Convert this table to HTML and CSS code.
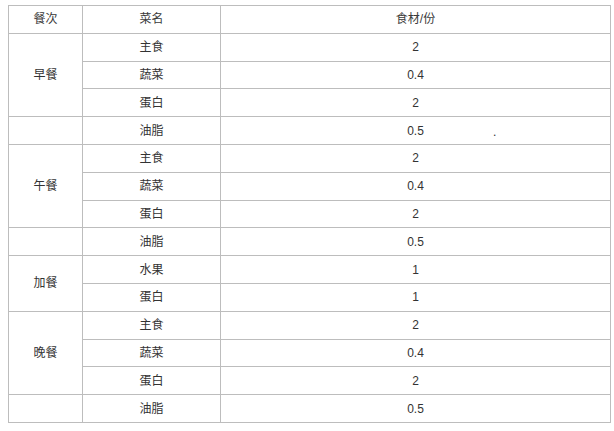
FILE: index.html
```html
<!DOCTYPE html>
<html lang="zh">
<head>
<meta charset="utf-8">
<link rel="stylesheet" href="styles.css">
</head>
<body>
<table class="meal-table">
  <colgroup>
    <col class="c1"><col class="c2"><col class="c3">
  </colgroup>
  <thead>
    <tr><th>餐次</th><th>菜名</th><th>食材/份</th></tr>
  </thead>
  <tbody>
    <tr><td rowspan="3">早餐</td><td>主食</td><td>2</td></tr>
    <tr><td>蔬菜</td><td>0.4</td></tr>
    <tr><td>蛋白</td><td>2</td></tr>
    <tr><td></td><td>油脂</td><td class="amount">0.5<span class="stray">.</span></td></tr>
    <tr><td rowspan="3">午餐</td><td>主食</td><td>2</td></tr>
    <tr><td>蔬菜</td><td>0.4</td></tr>
    <tr><td>蛋白</td><td>2</td></tr>
    <tr><td></td><td>油脂</td><td>0.5</td></tr>
    <tr><td rowspan="2">加餐</td><td>水果</td><td>1</td></tr>
    <tr><td>蛋白</td><td>1</td></tr>
    <tr><td rowspan="3">晚餐</td><td>主食</td><td>2</td></tr>
    <tr><td>蔬菜</td><td>0.4</td></tr>
    <tr><td>蛋白</td><td>2</td></tr>
    <tr><td></td><td>油脂</td><td>0.5</td></tr>
  </tbody>
</table>
</body>
</html>
```
FILE: styles.css
```css
html, body {
  margin: 0;
  background: #ffffff;
}
body {
  padding: 5px 0 0 8px;
  font-family: "Liberation Sans", "Noto Sans CJK SC", sans-serif;
  font-size: 12px;
  color: #333333;
}
.meal-table {
  border-collapse: collapse;
  width: 602px;
  table-layout: fixed;
}
.c1 { width: 74px; }
.c2 { width: 138px; }
.c3 { width: 390px; }
.meal-table th,
.meal-table td {
  border: 1px solid #bdbdbd;
  text-align: center;
  vertical-align: middle;
  padding: 0;
  height: 26.8px;
  font-weight: normal;
  line-height: 14px;
}
.meal-table th {
  color: #3a3a3a;
}
.amount {
  position: relative;
}
.stray {
  position: absolute;
  left: 272px;
  top: 8px;
}
```
